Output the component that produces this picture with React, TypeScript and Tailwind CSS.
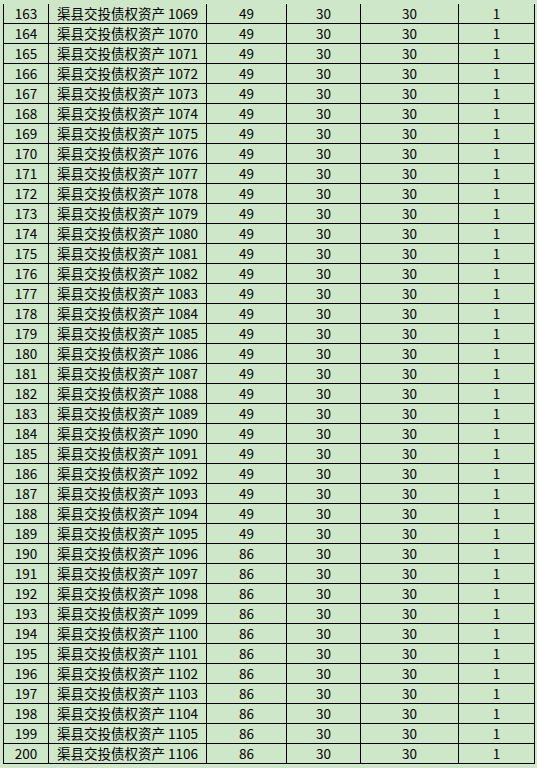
import React from 'react';

type Row = { no: number; name: string; a: number; b: number; c: number; d: number };

const rows: Row[] = Array.from({ length: 38 }, (_, i) => {
  const no = 163 + i;
  return {
    no,
    name: `渠县交投债权资产 ${1069 + i}`,
    a: no >= 190 ? 86 : 49,
    b: 30,
    c: 30,
    d: 1,
  };
});

const cell = 'h-[20px] border-l border-b border-black flex items-center justify-center';

const App: React.FC = () => {
  return (
    <div
      className="w-[537px] h-[768px] bg-[#cfe7c9] pl-[3px] pt-[4px] overflow-hidden text-[13.5px] leading-none text-black"
      style={{ fontFamily: '"Noto Sans CJK SC", "Noto Sans", sans-serif' }}
    >
      <div className="grid grid-cols-[45px_158px_80px_74px_98px_77px]">
        {rows.map((r) => (
          <React.Fragment key={r.no}>
            <div className={`${cell} ${r.no === 163 ? 'h-[19px]' : ''}`}>{r.no}</div>
            <div className={`${cell} ${r.no === 163 ? 'h-[19px]' : ''}`}>{r.name}</div>
            <div className={`${cell} ${r.no === 163 ? 'h-[19px]' : ''}`}>{r.a}</div>
            <div className={`${cell} ${r.no === 163 ? 'h-[19px]' : ''}`}>{r.b}</div>
            <div className={`${cell} ${r.no === 163 ? 'h-[19px]' : ''}`}>{r.c}</div>
            <div className={`${cell} border-r ${r.no === 163 ? 'h-[19px]' : ''}`}>{r.d}</div>
          </React.Fragment>
        ))}
      </div>
    </div>
  );
};

export default App;
